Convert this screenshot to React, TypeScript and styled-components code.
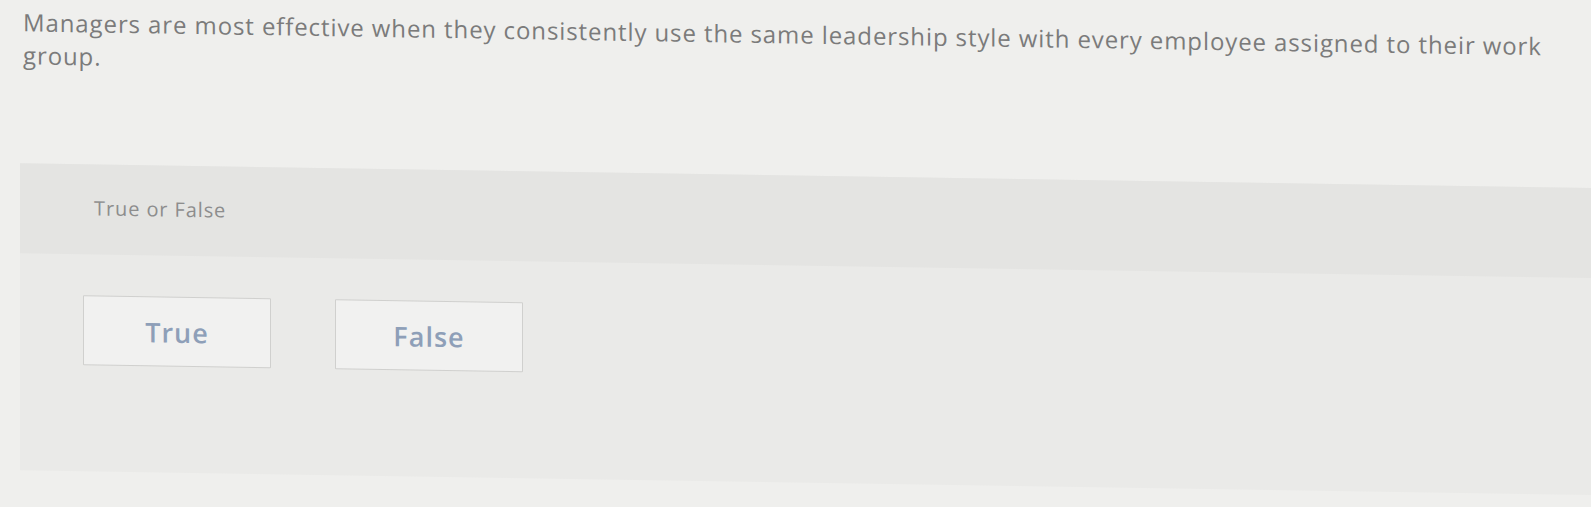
import React from 'react'
import styled, { createGlobalStyle } from 'styled-components'

const GlobalStyle = createGlobalStyle`
    html, body {
        margin: 0;
        padding: 0;
        background: #efefed;
        overflow: hidden;
    }
    body {
        font-family: "Open Sans", "Liberation Sans", sans-serif;
    }
`

const App = () => {
    return (
        <Page>
            <GlobalStyle />
            <Question>
                Managers are most effective when they consistently use the same leadership style with every employee assigned to their work group.
            </Question>
            <AnswerPanel>
                <PanelHeader>
                    <PanelLabel>True or False</PanelLabel>
                </PanelHeader>
                <Choices>
                    <Choice type="button">True</Choice>
                    <Choice type="button">False</Choice>
                </Choices>
            </AnswerPanel>
        </Page>
    )
}

export default App

// the whole sheet leans a little, dropping toward the right
const Page = styled.div`
    width: 1591px;
    height: 507px;
    overflow: hidden;
    transform-origin: 0 0;
    transform: skewY(0.9deg);
`

const Question = styled.div`
    padding: 5px 15px 0 23px;
    font-size: 24px;
    line-height: 33px;
    letter-spacing: 0.9px;
    color: #7b7b7b;
`

const AnswerPanel = styled.div`
    margin: 92px 0 0 20px;
    height: 307px;
    background: #eaeae8;
`

const PanelHeader = styled.div`
    height: 90px;
    background: #e4e4e2;
    padding: 30px 0 0 74px;
    box-sizing: border-box;
`

const PanelLabel = styled.div`
    font-size: 20px;
    line-height: 28px;
    letter-spacing: 0.9px;
    color: #8d8d8d;
`

const Choices = styled.div`
    display: flex;
    align-items: flex-start;
    gap: 64px;
    padding: 41px 0 0 63px;
`

const Choice = styled.button`
    width: 188px;
    height: 70px;
    background: #f1f1f0;
    border: 1.5px solid #d0d0ce;
    border-radius: 1px;
    font-family: "Open Sans", "Liberation Sans", sans-serif;
    font-size: 27px;
    font-weight: 600;
    letter-spacing: 1px;
    color: #8e9fb8;
    cursor: pointer;
`
